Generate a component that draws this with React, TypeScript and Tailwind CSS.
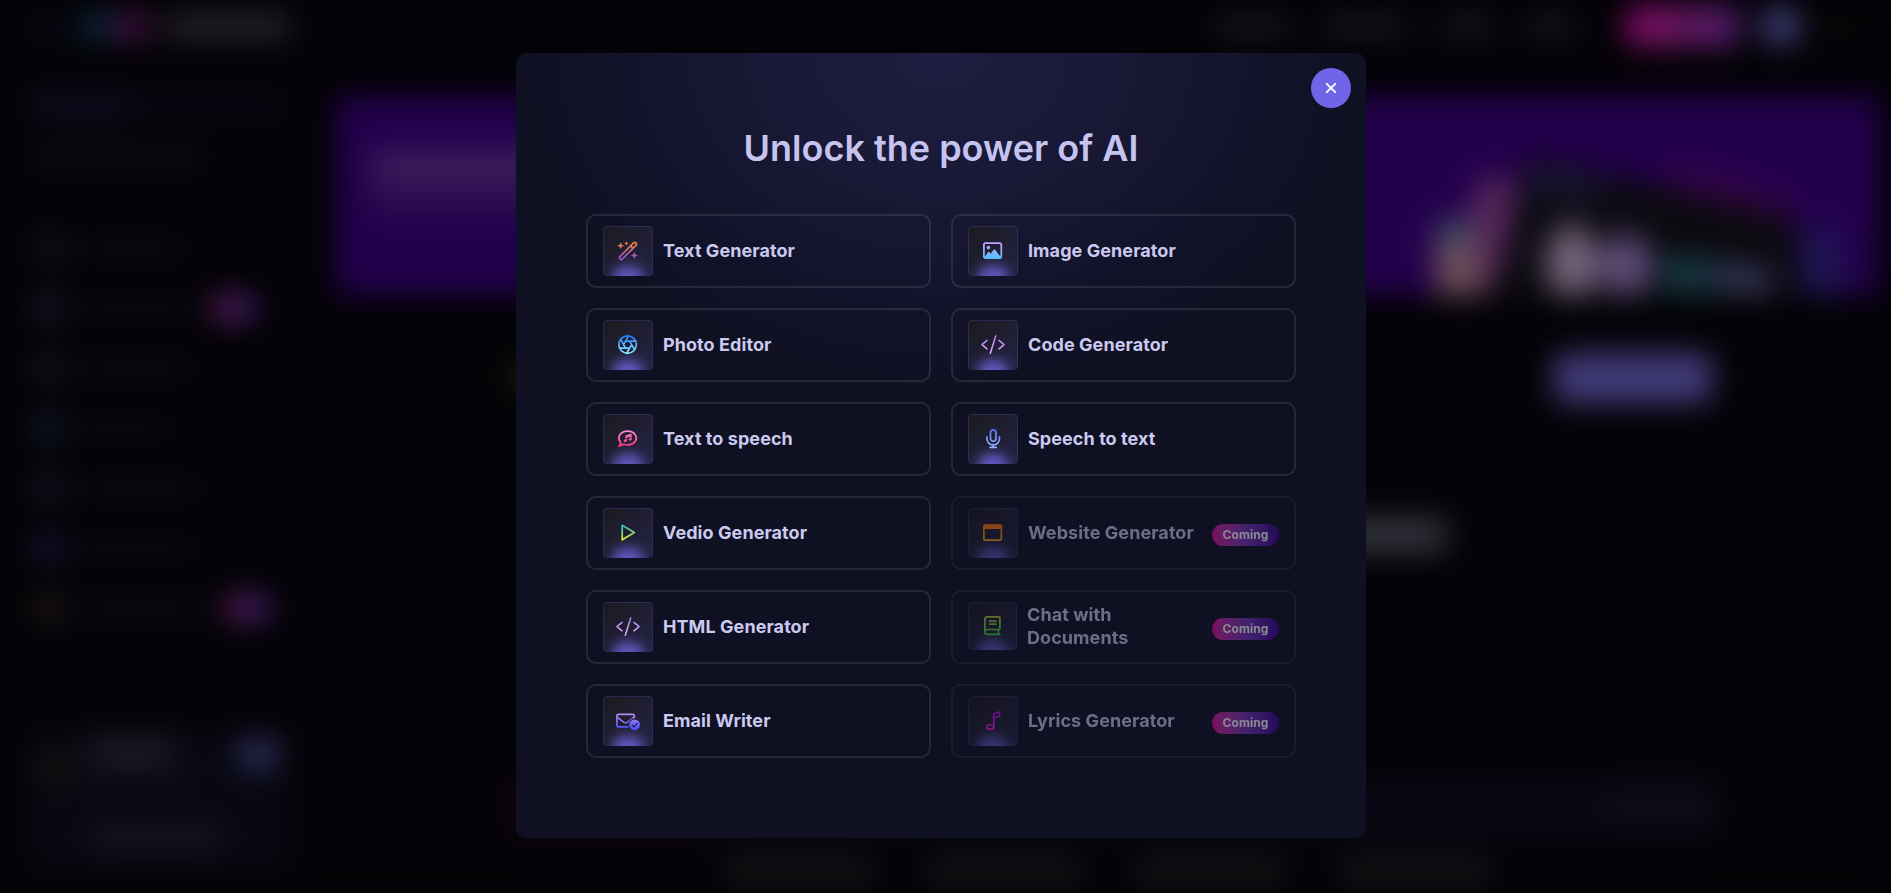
import React, { useId } from "react";

type IconProps = {
  w: number;
  h?: number;
  origin?: number;
  from: string;
  to: string;
  children: (paint: string) => React.ReactNode;
};

function Glyph({ w, h = 512, origin = 0, from, to, children }: IconProps) {
  const id = useId();
  const paint = `url(#${id})`;
  return (
    <svg
      viewBox={`${origin} ${origin} ${w} ${h}`}
      width={(w / h) * 19.2}
      height={19.2}
      fill="none"
      stroke={paint}
      strokeWidth={46}
      strokeLinecap="round"
      strokeLinejoin="round"
      className="relative shrink-0 overflow-visible"
    >
      <defs>
        <linearGradient id={id} gradientUnits="userSpaceOnUse" x1={w / 2} y1="0" x2={w / 2} y2={h}>
          <stop offset="0.06" stopColor={from} />
          <stop offset="0.94" stopColor={to} />
        </linearGradient>
      </defs>
      {children(paint)}
    </svg>
  );
}

const Wand = () => (
  <Glyph w={576} from="#f8842c" to="#8f52d4">
    {(p) => (
      <>
        <path
          strokeWidth={46}
          d="M449 45Q471 23 493 45L513 65Q535 87 513 109L139 483Q117 505 95 483L75 463Q53 441 75 419ZM361 133L425 197"
        />
        <g fill={p} stroke="none">
          <path d="M98 32L126 98L192 126L126 154L98 220L70 154L4 126L70 98Z" />
          <path d="M250 4L268 46L310 64L268 82L250 124L232 82L190 64L232 46Z" />
          <path d="M460 292L488 358L554 386L488 414L460 480L432 414L366 386L432 358Z" />
        </g>
      </>
    )}
  </Glyph>
);

const Picture = () => (
  <Glyph w={512} from="#cf9dff" to="#55bdfb">
    {(p) => (
      <path
        fill={p}
        stroke="none"
        d="M448 80c8.8 0 16 7.2 16 16V415.8l-5-6.5-136-176c-4.5-5.9-11.6-9.3-19-9.3s-14.4 3.4-19 9.3L202 340.7l-30.5-42.7C167 291.7 159.8 288 152 288s-15 3.7-19.5 10.1l-80 112L48 416.3V96c0-8.8 7.2-16 16-16H448zM64 32C28.7 32 0 60.7 0 96V416c0 35.3 28.7 64 64 64H448c35.3 0 64-28.7 64-64V96c0-35.3-28.7-64-64-64H64zm80 192a48 48 0 1 0 0-96 48 48 0 1 0 0 96z"
      />
    )}
  </Glyph>
);

const Shutter = () => (
  <Glyph w={22} h={22} origin={1} from="#1f78ff" to="#86e8ff">
    {() => (
      <g strokeWidth={1.9}>
        <circle cx="12" cy="12" r="10" />
        <path d="m14.31 8 5.74 9.94M9.69 8h11.48M7.38 12l5.74-9.94M9.69 16 3.95 6.06M14.31 16H2.83M16.62 12l-5.74 9.94" />
      </g>
    )}
  </Glyph>
);

const CodeTag = () => (
  <Glyph w={640} from="#a97df5" to="#e0aef5">
    {() => <path strokeWidth={42} d="M160 144L26 256L160 368M392 24L248 488M480 144L614 256L480 368" />}
  </Glyph>
);

const MusicBubble = () => (
  <Glyph w={512} from="#ff8fdc" to="#ff2f7a">
    {(p) => (
      <>
        <path
          fill={p}
          stroke="none"
          d="M123.6 391.3c12.9-9.4 29.6-11.8 44.6-6.4c26.5 9.6 56.2 15.1 87.8 15.1c124.7 0 208-80.5 208-160s-83.3-160-208-160S48 160.5 48 240c0 32 12.4 62.8 35.7 89.2c8.6 9.7 12.8 22.5 11.8 35.5c-1.4 18.1-5.7 34.7-11.3 49.4c17-7.9 31.1-16.7 39.4-22.7zM21.2 431.9c1.8-2.7 3.5-5.4 5.1-8.1c10-16.6 19.5-38.4 21.4-62.9C17.7 326.8 0 285.1 0 240C0 125.1 114.6 32 256 32s256 93.1 256 208s-114.6 208-256 208c-37.1 0-72.3-6.4-104.1-17.9c-11.9 8.7-31.3 20.6-54.3 30.6c-15.1 6.6-32.3 12.6-50.1 16.1c-.8 .2-1.6 .3-2.4 .5c-4.4 .8-8.7 1.5-13.2 1.9c-.2 0-.5 .1-.7 .1c-5.1 .5-10.2 .8-15.3 .8c-6.5 0-12.3-3.9-14.8-9.9c-2.5-6-1.1-12.8 3.4-17.4c4.1-4.2 7.8-8.7 11.3-13.5c1.7-2.3 3.3-4.6 4.8-6.9c.1-.2 .2-.3 .3-.5z"
        />
        <path strokeWidth={34} d="M216 312V186L346 146V276M216 226L346 186" />
        <ellipse cx="192" cy="314" rx="40" ry="32" fill={p} stroke="none" />
        <ellipse cx="322" cy="278" rx="40" ry="32" fill={p} stroke="none" />
      </>
    )}
  </Glyph>
);

const Mic = () => (
  <Glyph w={384} from="#6272f2" to="#93b6ff">
    {() => (
      <path d="M120 96a72 72 0 0 1 144 0V256a72 72 0 0 1-144 0ZM24 208V256a168 168 0 0 0 336 0V208M192 424V488M112 488H272" />
    )}
  </Glyph>
);

const Play = () => (
  <Glyph w={384} from="#1fb4e0" to="#f2f018">
    {() => <path d="M32 62L356 256L32 450Z" />}
  </Glyph>
);

const Window = () => (
  <Glyph w={512} from="#ff6c0c" to="#ffb016">
    {(p) => (
      <>
        <rect x="23" y="55" width="466" height="402" rx="40" strokeWidth={44} />
        <path fill={p} stroke="none" d="M0 96a64 64 0 0 1 64-64H448a64 64 0 0 1 64 64V160H0Z" />
      </>
    )}
  </Glyph>
);

const Book = () => (
  <Glyph w={448} from="#b4c83c" to="#34e23c">
    {() => (
      <path
        strokeWidth={46}
        d="M24 424V88a64 64 0 0 1 64-64H400a24 24 0 0 1 24 24V336a24 24 0 0 1-24 24H88a64 64 0 0 0 0 128H424M384 360V488M144 136H320M144 216H320"
      />
    )}
  </Glyph>
);

const Note = () => (
  <Glyph w={384} from="#a814f5" to="#f522dc">
    {() => (
      <>
        <path d="M208 424V70L360 30V140L208 190" />
        <ellipse cx="116" cy="424" rx="92" ry="62" />
      </>
    )}
  </Glyph>
);

const MailCheck = () => {
  const cut = useId();
  return (
    <Glyph w={640} from="#c592ef" to="#4c50ff">
      {(p) => (
        <>
          <mask id={cut} maskUnits="userSpaceOnUse" x="0" y="0" width="640" height="512">
            <rect width="640" height="512" fill="#fff" stroke="none" />
            <circle cx="496" cy="368" r="174" fill="#000" stroke="none" />
          </mask>
          <g mask={`url(#${cut})`}>
            <rect x="24" y="88" width="464" height="336" rx="36" />
            <path d="M30 168L212 304Q256 334 300 304L482 168" />
          </g>
          <path
            fill={p}
            fillRule="evenodd"
            stroke="none"
            d="M496 224a144 144 0 1 0 0 288a144 144 0 1 0 0-288ZM563 315L586 338L478 446L416 384L439 361L478 400Z"
          />
        </>
      )}
    </Glyph>
  );
};

type Tool = { name: string; icon: () => React.ReactElement; soon?: boolean; wrap?: boolean };

const tools: Tool[] = [
  { name: "Text Generator", icon: Wand },
  { name: "Image Generator", icon: Picture },
  { name: "Photo Editor", icon: Shutter },
  { name: "Code Generator", icon: CodeTag },
  { name: "Text to speech", icon: MusicBubble },
  { name: "Speech to text", icon: Mic },
  { name: "Vedio Generator", icon: Play },
  { name: "Website Generator", icon: Window, soon: true },
  { name: "HTML Generator", icon: CodeTag },
  { name: "Chat with Documents", icon: Book, soon: true, wrap: true },
  { name: "Email Writer", icon: MailCheck },
  { name: "Lyrics Generator", icon: Note, soon: true },
];

function ToolCard({ name, icon: Icon, soon, wrap }: Tool) {
  return (
    <a
      className={`flex h-[74px] items-start gap-[10px] rounded-[10px] border-2 border-[#ffffff1a] px-[15px] py-[10px] ${soon ? "opacity-50" : ""}`}
    >
      <span
        className={`relative flex shrink-0 items-center justify-center overflow-hidden rounded-[4px] bg-linear-to-br from-[#1b1a20] to-[#242244] ${wrap ? "h-[48px] w-[49px]" : "size-[50px]"}`}
      >
        <span className="absolute -bottom-[16px] left-1/2 h-[26px] w-[30px] -translate-x-1/2 rounded-[10px] bg-[#6156be] blur-[6px]" />
        <span className="absolute inset-0 rounded-[4px] border border-b-0 border-[#7065e8]/20" />
        <Icon />
      </span>
      <span
        className={`flex items-center text-[18px] leading-[23px] font-bold tracking-[0.07px] text-[#cbc9f0] ${wrap ? "h-[47px] w-[130px]" : "h-[48px] whitespace-nowrap"}`}
      >
        {name}
      </span>
      {soon && (
        <span className="mt-[16px] ml-auto flex h-[22px] w-[67px] items-center justify-center rounded-full bg-linear-to-r from-[#e0009c] via-[#7932bb] to-[#3d0094] text-[12px] font-bold tracking-[0.1px] text-white">
          Coming
        </span>
      )}
    </a>
  );
}

const menu = [
  { dot: "bg-[#161422]", bar: "w-[116px]" },
  { dot: "bg-[#161a2c]", bar: "w-[120px]", tag: "ml-[16px]" },
  { dot: "bg-[#1a1424]", bar: "w-[124px]" },
  { dot: "bg-[#121a30]", bar: "w-[98px]" },
  { dot: "bg-[#141728]", bar: "w-[128px]" },
  { dot: "bg-[#171536]", bar: "w-[122px]" },
  { dot: "bg-[#20181a]", bar: "w-[134px]", tag: "ml-[16px]" },
];

function Backdrop() {
  return (
    <div className="flex h-[893px] w-[1891px] flex-col overflow-hidden bg-[#030206] blur-[15px]">
      <header className="flex h-[52px] items-center pr-[36px] pl-[30px]">
        <div className="h-[24px] w-[30px] bg-[#090b18]" />
        <div className="ml-[20px] h-[28px] w-[34px] bg-[#0c2538]" />
        <div className="h-[28px] w-[36px] bg-[#400f42]" />
        <div className="ml-[16px] h-[26px] w-[124px] bg-[#23242a]" />
        <div className="ml-auto flex gap-[34px]">
          <div className="h-[20px] w-[74px] bg-[#191920]" />
          <div className="h-[20px] w-[84px] bg-[#191920]" />
          <div className="h-[20px] w-[52px] bg-[#191920]" />
          <div className="h-[20px] w-[48px] bg-[#191920]" />
        </div>
        <div className="ml-[50px] h-[40px] w-[116px] rounded-[14px] bg-linear-to-r from-[#90046e] via-[#661660] to-[#4e1c74]" />
        <div className="ml-[22px] h-[36px] w-[36px] rounded-[12px] bg-[#444280]" />
        <div className="ml-[26px] h-[22px] w-[30px] bg-[#0d0809]" />
      </header>
      <div className="flex grow">
        <aside className="flex w-[335px] flex-col pt-[39px] pl-[28px]">
          <div className="flex h-[28px] w-[262px] bg-[#050710]">
            <div className="h-[28px] w-[106px] bg-[#0d0d20]" />
          </div>
          <div className="mt-[28px] h-[20px] w-[178px] bg-[#0c0d13]" />
          <div className="mt-[51px] flex flex-col">
            {menu.map((m, i) => (
              <div key={i} className="flex h-[60px] items-center pl-[6px]">
                <div className={`size-[28px] rounded ${m.dot}`} />
                <div className={`ml-[12px] h-[16px] bg-[#0b0d12] ${m.bar}`} />
                {m.tag && (
                  <div className={`h-[28px] w-[46px] rounded-[10px] bg-linear-to-r from-[#5c1248] to-[#3a1e74] ${m.tag}`} />
                )}
              </div>
            ))}
          </div>
          <div className="mt-[92px] flex h-[142px] w-[262px] flex-col bg-[#070812]">
            <div className="flex items-start pt-[10px] pr-[12px] pl-[14px]">
              <div className="mt-[14px] size-[28px] bg-[#1c1410]" />
              <div className="ml-[20px] flex flex-col gap-[6px]">
                <div className="h-[22px] w-[84px] bg-[#20202a]" />
                <div className="h-[14px] w-[100px] bg-[#0e0e18]" />
              </div>
              <div className="ml-auto h-[28px] w-[40px] rounded-[12px] bg-[#343064]" />
            </div>
            <div className="mt-[44px] ml-[66px] h-[22px] w-[124px] bg-[#18181f]" />
          </div>
        </aside>
        <main className="flex w-[1545px] flex-col pt-[44px]">
          <div className="flex h-[199px] w-full bg-[#23004c]">
            <div className="mt-[56px] ml-[36px] flex flex-col gap-[8px]">
              <div className="h-[24px] w-[260px] bg-[#412560]" />
              <div className="h-[24px] w-[220px] bg-[#311453]" />
            </div>
            <svg viewBox="1360 96 520 199" className="ml-auto h-[199px] w-[520px]">
              <ellipse cx="1730" cy="194" rx="70" ry="16" transform="rotate(16 1730 194)" fill="#360448" />
              <rect x="1802" y="230" width="40" height="66" fill="#1f1654" />
              <path d="M1480 178L1518 180L1498 296L1444 296Z" fill="#56285a" />
              <path d="M1436 228L1470 228L1484 296L1436 296Z" fill="#705058" />
              <path d="M1440 220L1470 220L1466 246L1438 246Z" fill="#385064" />
              <path d="M1526 156L1560 162L1796 218L1800 296L1488 296L1510 240Z" fill="#0b0a10" />
              <path d="M1532 162L1610 178L1590 206L1526 194Z" fill="#15152c" />
              <ellipse cx="1572" cy="264" rx="26" ry="40" fill="#75637a" />
              <ellipse cx="1626" cy="266" rx="26" ry="32" fill="#604c7a" />
              <path d="M1666 254L1714 260L1714 294L1660 292Z" fill="#173a44" />
              <path d="M1718 262L1770 270L1774 294L1718 292Z" fill="#38385c" />
            </svg>
          </div>
          <div className="mt-[58px] flex justify-between pr-[168px] pl-[178px]">
            <div className="mt-[12px] size-[24px] bg-[#30260c]" />
            <div className="h-[50px] w-[158px] rounded-lg bg-[#423b7a]" />
          </div>
          <div className="mt-[115px] ml-[440px] h-[34px] w-[672px] bg-[#34343e]" />
          <div className="mt-[222px] ml-[173px] flex h-[66px] w-[1210px] items-center bg-linear-to-r from-[#10050f] via-[#070612] to-[#090713]">
            <div className="ml-auto h-[28px] w-[110px] bg-[#0e0d18]" />
          </div>
          <div className="mt-[18px] ml-[390px] flex gap-[54px]">
            <div className="h-[28px] w-[148px] shrink-0 bg-[#141417]" />
            <div className="h-[28px] w-[154px] shrink-0 bg-[#141417]" />
            <div className="h-[28px] w-[150px] shrink-0 bg-[#141417]" />
            <div className="h-[28px] w-[152px] shrink-0 bg-[#141417]" />
          </div>
        </main>
      </div>
    </div>
  );
}

export default function App() {
  return (
    <div className="relative h-[893px] w-[1891px] overflow-hidden bg-[#030206] font-['Inter',sans-serif]">
      <Backdrop />
      <div
        role="dialog"
        className="absolute top-[53px] left-[516px] flex h-[785px] w-[850px] flex-col rounded-[10px] bg-[#0f1021] bg-[radial-gradient(430px_340px_at_50%_0%,#1f1d41_0%,#191836_40%,#12132a_75%,#0f1021_100%)] px-[70px]"
      >
        <button
          aria-label="Close"
          className="absolute top-[15px] right-[15px] flex size-[40px] items-center justify-center rounded-full bg-[#7065e8]"
        >
          <svg width="12" height="12" viewBox="0 0 12 12" stroke="#fff" strokeWidth="1.9" strokeLinecap="round">
            <path d="M1.8 1.8L10.2 10.2M10.2 1.8L1.8 10.2" />
          </svg>
        </button>
        <h2 className="mt-[73px] text-center text-[36px] leading-[44px] font-semibold text-[#c5c3ef]">
          Unlock the power of AI
        </h2>
        <div className="mt-[44px] grid grid-cols-2 gap-[20px]">
          {tools.map((t) => (
            <ToolCard key={t.name} {...t} />
          ))}
        </div>
      </div>
    </div>
  );
}
